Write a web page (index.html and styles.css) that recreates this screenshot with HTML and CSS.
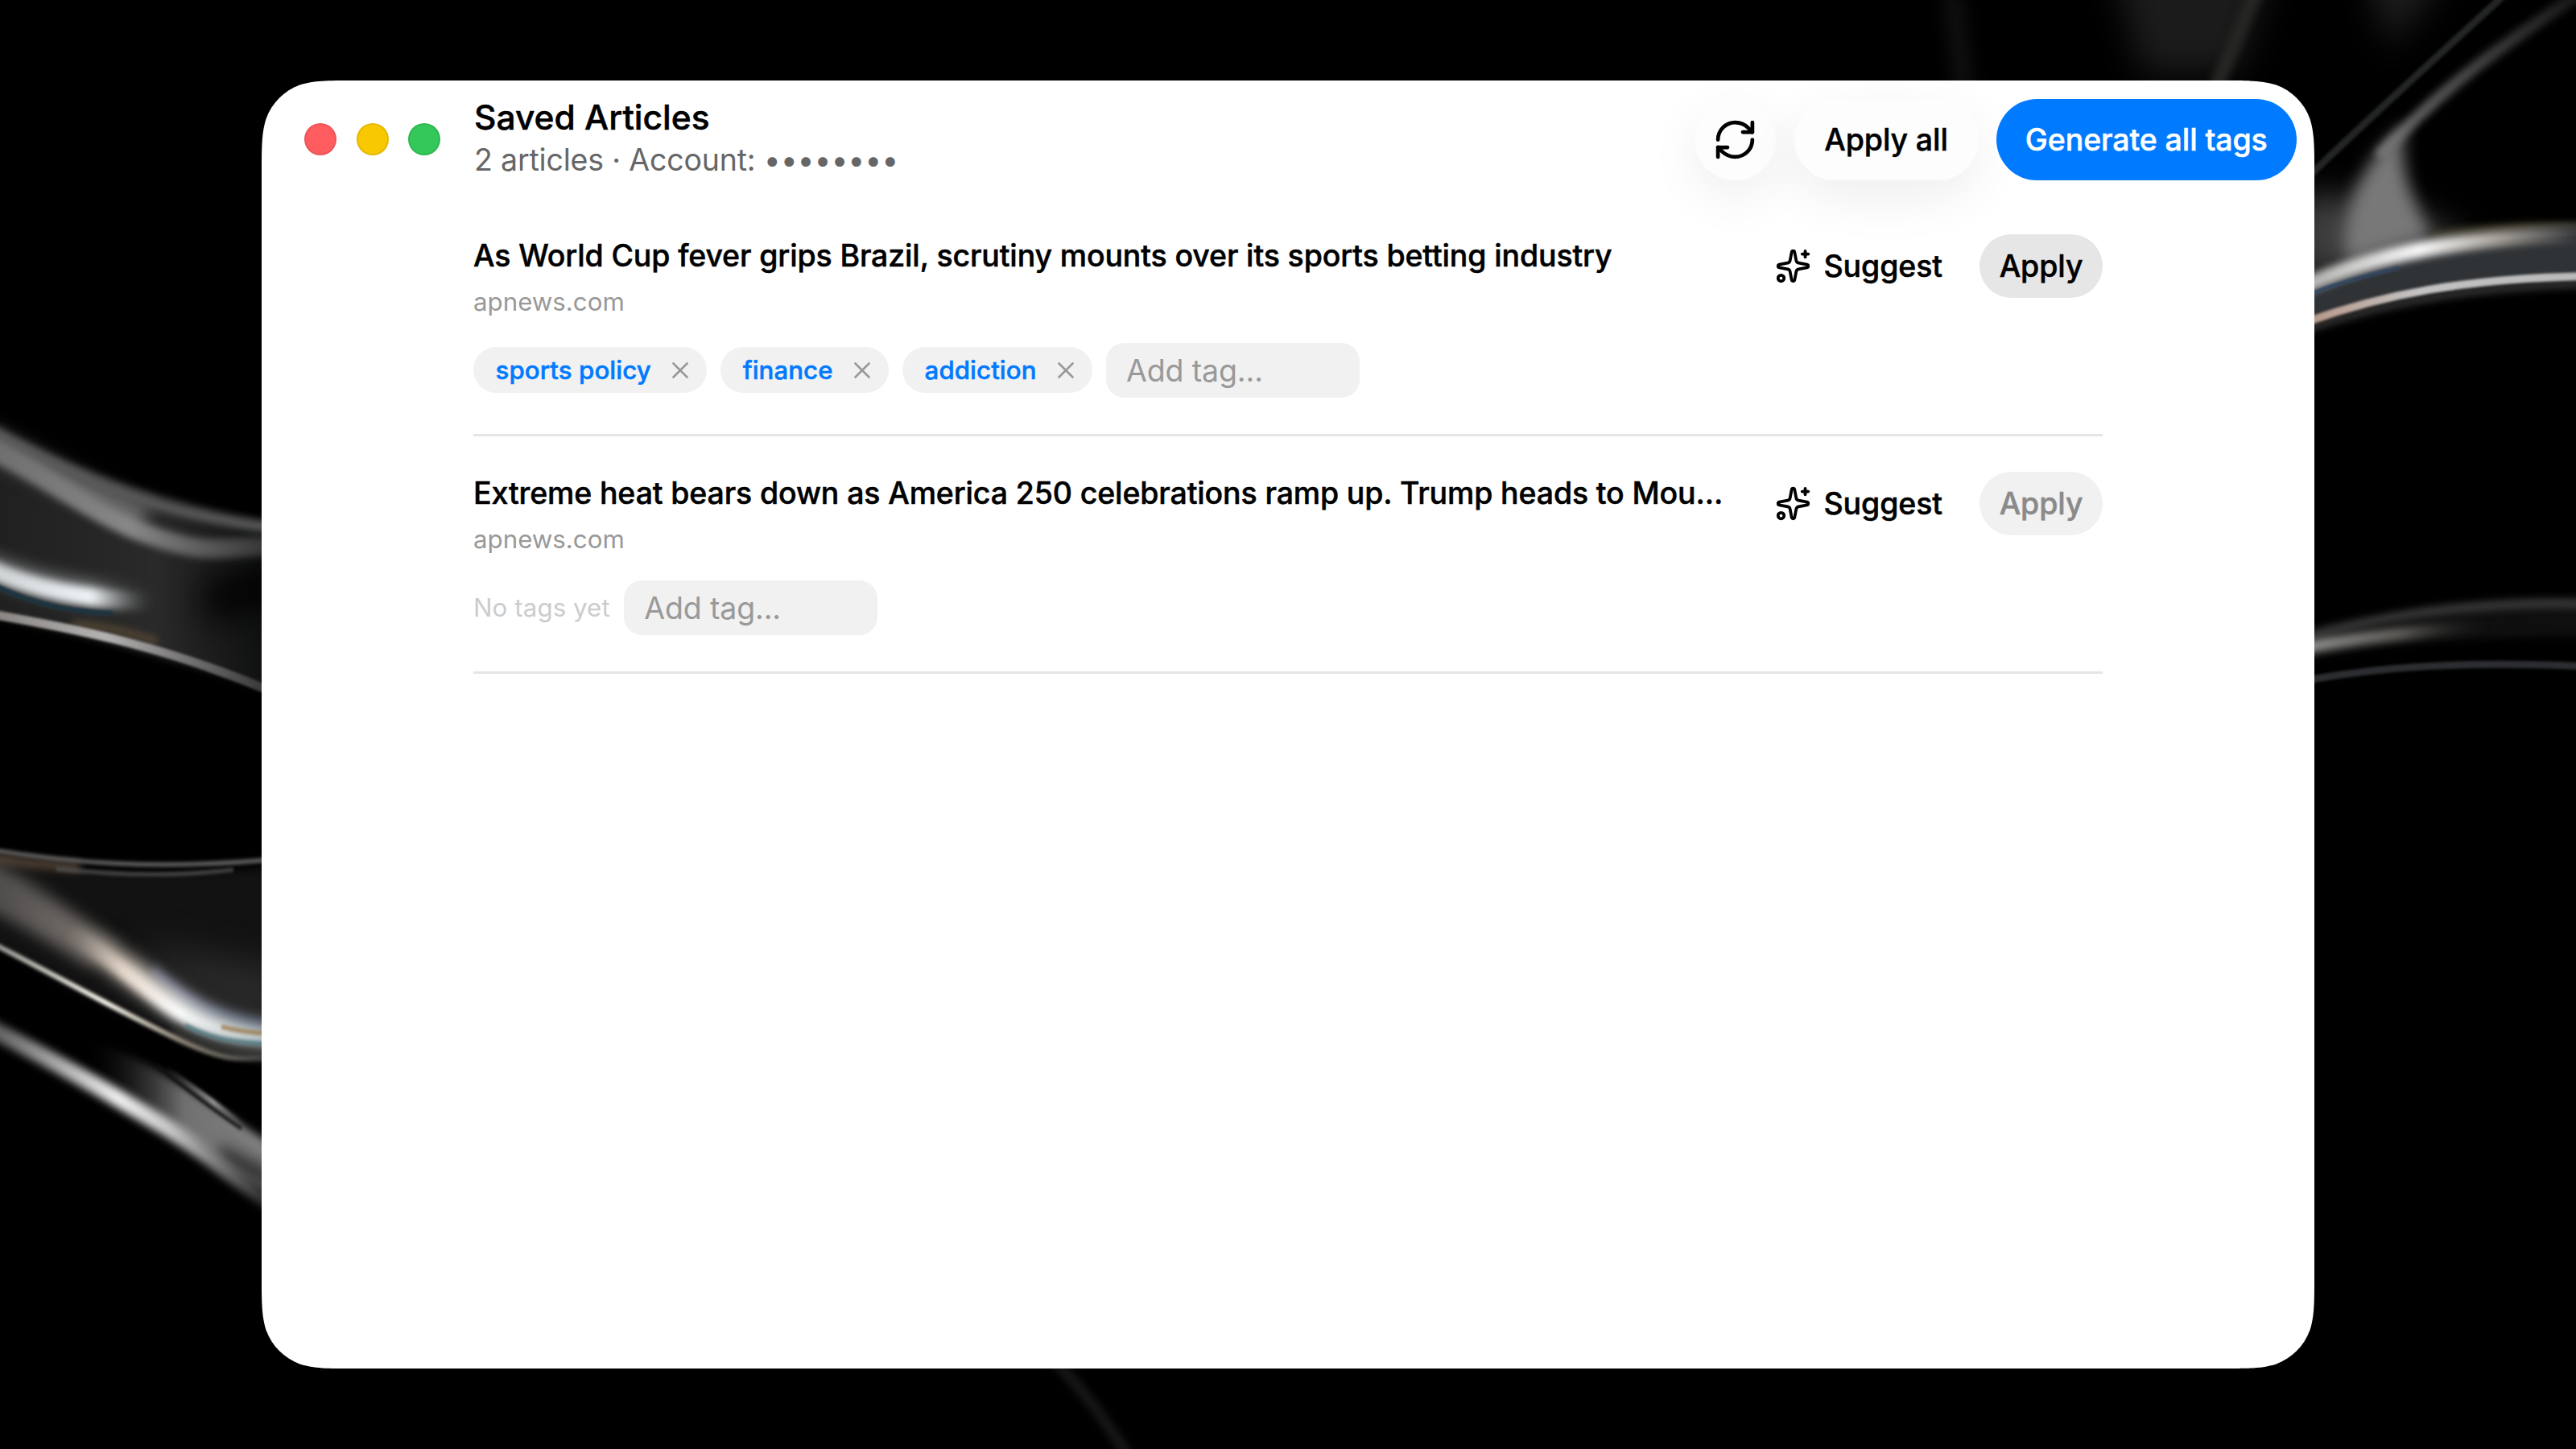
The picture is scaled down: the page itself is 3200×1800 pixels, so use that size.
FILE: index.html
```html
<!DOCTYPE html>
<html lang="en">
<head>
  <meta charset="UTF-8" />
  <meta name="viewport" content="width=device-width, initial-scale=1.0"/>
  <title>Saved Articles</title>
  <link rel="stylesheet" href="styles.css">
</head>
<body>
  <svg class="wallpaper" viewBox="0 0 3200 1800" fill="none" aria-hidden="true">
    <defs>
      <filter id="b2" color-interpolation-filters="sRGB" filterUnits="userSpaceOnUse" x="-100" y="-100" width="3400" height="2000"><feGaussianBlur stdDeviation="1.8"/></filter>
      <filter id="b5" color-interpolation-filters="sRGB" filterUnits="userSpaceOnUse" x="-100" y="-100" width="3400" height="2000"><feGaussianBlur stdDeviation="5"/></filter>
      <filter id="b10" color-interpolation-filters="sRGB" filterUnits="userSpaceOnUse" x="-100" y="-100" width="3400" height="2000"><feGaussianBlur stdDeviation="10"/></filter>
      <filter id="b20" color-interpolation-filters="sRGB" filterUnits="userSpaceOnUse" x="-100" y="-100" width="3400" height="2000"><feGaussianBlur stdDeviation="20"/></filter>
      <linearGradient id="fold1" gradientUnits="userSpaceOnUse" x1="0" y1="0" x2="325" y2="0">
        <stop offset="0" stop-color="#202020"/><stop offset=".6" stop-color="#2a2a2a"/><stop offset="1" stop-color="#101111"/>
      </linearGradient>
      <linearGradient id="band1" gradientUnits="userSpaceOnUse" x1="0" y1="0" x2="325" y2="0">
        <stop offset="0" stop-color="#707070"/><stop offset=".5" stop-color="#888"/><stop offset="1" stop-color="#383838"/>
      </linearGradient>
      <linearGradient id="glow1" gradientUnits="userSpaceOnUse" x1="0" y1="0" x2="190" y2="0">
        <stop offset="0" stop-color="#d0d4d6"/><stop offset=".6" stop-color="#eef3f6"/><stop offset="1" stop-color="#555" stop-opacity="0"/>
      </linearGradient>
      <linearGradient id="rim1" gradientUnits="userSpaceOnUse" x1="0" y1="0" x2="325" y2="0">
        <stop offset="0" stop-color="#8a8684"/><stop offset=".4" stop-color="#b5b3b2"/><stop offset="1" stop-color="#3a3a3a"/>
      </linearGradient>
      <linearGradient id="band2" gradientUnits="userSpaceOnUse" x1="0" y1="0" x2="325" y2="0">
        <stop offset="0" stop-color="#4e4c4c"/><stop offset=".3" stop-color="#7d7671"/><stop offset=".47" stop-color="#e8dacc"/><stop offset=".68" stop-color="#fff"/><stop offset="1" stop-color="#b8c4c8"/>
      </linearGradient>
      <linearGradient id="rim2" gradientUnits="userSpaceOnUse" x1="0" y1="0" x2="325" y2="0">
        <stop offset="0" stop-color="#9d9d98"/><stop offset=".4" stop-color="#fffaf2"/><stop offset=".7" stop-color="#8b8474"/><stop offset="1" stop-color="#444"/>
      </linearGradient>
      <linearGradient id="band3" gradientUnits="userSpaceOnUse" x1="0" y1="0" x2="325" y2="0">
        <stop offset="0" stop-color="#666"/><stop offset=".45" stop-color="#f2f2f2"/><stop offset=".65" stop-color="#c8c8c8"/><stop offset="1" stop-color="#333"/>
      </linearGradient>
      <linearGradient id="fold3" gradientUnits="userSpaceOnUse" x1="110" y1="0" x2="325" y2="0">
        <stop offset="0" stop-color="#111" stop-opacity="0"/><stop offset=".55" stop-color="#707070"/><stop offset="1" stop-color="#808080"/>
      </linearGradient>
      <linearGradient id="line3" gradientUnits="userSpaceOnUse" x1="205" y1="0" x2="305" y2="0">
        <stop offset="0" stop-color="#777" stop-opacity="0"/><stop offset=".6" stop-color="#999"/><stop offset="1" stop-color="#777" stop-opacity="0"/>
      </linearGradient>
      <linearGradient id="arc1" gradientUnits="userSpaceOnUse" x1="2875" y1="0" x2="3200" y2="0">
        <stop offset="0" stop-color="#b5b5b2"/><stop offset=".4" stop-color="#f8f7f8"/><stop offset=".7" stop-color="#a8a39b"/><stop offset="1" stop-color="#3a3c40"/>
      </linearGradient>
      <linearGradient id="arc2" gradientUnits="userSpaceOnUse" x1="2875" y1="0" x2="3200" y2="0">
        <stop offset="0" stop-color="#b89a8c"/><stop offset=".4" stop-color="#c3c3c3"/><stop offset="1" stop-color="#b9b9b9"/>
      </linearGradient>
      <linearGradient id="arc3" gradientUnits="userSpaceOnUse" x1="2875" y1="0" x2="3090" y2="0">
        <stop offset="0" stop-color="#8a8a88"/><stop offset=".5" stop-color="#5d5b57"/><stop offset="1" stop-color="#222" stop-opacity="0"/>
      </linearGradient>
      <linearGradient id="ray" gradientUnits="userSpaceOnUse" x1="3190" y1="0" x2="2950" y2="200">
        <stop offset="0" stop-color="#1c1c1c"/><stop offset="1" stop-color="#707070"/>
      </linearGradient>
    </defs>

    <!-- upper left fold -->
    <path filter="url(#b5)" fill="url(#fold1)" d="M-20 530 C50 560 180 620 340 648 V860 C230 825 120 790 -20 765z"/>
    <path filter="url(#b20)" stroke="#020202" stroke-width="50" d="M255 752 C290 738 320 730 370 722"/>
    <path filter="url(#b10)" stroke="#6a6a6a" stroke-width="34" d="M-20 545 C50 580 110 615 180 645"/>
    <path filter="url(#b5)" stroke="#5a5a5a" stroke-width="13" d="M-20 530 C80 590 180 635 340 656"/>
    <path filter="url(#b5)" stroke="url(#band1)" stroke-width="24" d="M-20 552 C60 592 120 642 190 666 S270 680 340 678"/>
    <path filter="url(#b10)" stroke="url(#glow1)" stroke-width="26" opacity=".5" d="M-20 700 C40 726 100 740 190 744"/>
    <path filter="url(#b5)" stroke="url(#glow1)" stroke-width="22" d="M-20 704 C40 732 100 744 190 748"/>
    <path filter="url(#b2)" stroke="#1d3440" stroke-width="6" d="M-10 726 C40 750 80 759 140 762"/>
    <path filter="url(#b5)" stroke="#594a35" stroke-width="8" d="M90 775 C130 778 160 785 195 797"/>
    <path filter="url(#b2)" stroke="url(#rim1)" stroke-width="11" d="M-10 763 C110 784 210 805 340 860"/>

    <g transform="matrix(1 0 0 1.0714 0 -71.4)">
      <!-- lower left fold -->
      <path filter="url(#b5)" fill="#121212" d="M-20 1055 C90 1080 200 1085 340 1072 V1280 C230 1290 120 1230 -20 1155z"/>
      <path filter="url(#b20)" fill="#2a2a2a" d="M170 1160 L350 1190 V1260 C280 1250 220 1220 170 1160z"/>
      <path filter="url(#b10)" fill="#555250" d="M-30 1060 C30 1075 90 1130 150 1165 L110 1185 C60 1160 20 1130 -30 1112z"/>
      <path filter="url(#b5)" stroke="#5b4a3c" stroke-width="10" d="M-10 1062 C30 1066 60 1070 100 1072"/>
      <path filter="url(#b2)" stroke="#606060" stroke-width="5" d="M-10 1052 C80 1066 190 1076 340 1063"/>
      <path filter="url(#b2)" stroke="#505050" stroke-width="4" d="M70 1074 C150 1082 220 1083 290 1075"/>
      <path filter="url(#b5)" stroke="#373e55" stroke-width="14" d="M190 1190 C230 1230 270 1247 335 1257"/>
      <path filter="url(#b10)" stroke="url(#band2)" stroke-width="30" opacity=".85" d="M-20 1095 C60 1130 120 1165 180 1205 S270 1264 340 1271"/>
      <path filter="url(#b5)" stroke="url(#band2)" stroke-width="16" d="M90 1150 C130 1172 170 1206 205 1230 S280 1266 340 1271"/>
      <path filter="url(#b2)" stroke="#9a7648" stroke-width="4" d="M275 1257 C295 1262 310 1264 335 1265"/>
      <path filter="url(#b2)" stroke="#4c7d88" stroke-width="4" d="M230 1256 C260 1270 290 1276 335 1277"/>
      <path filter="url(#b5)" stroke="#3a3a36" stroke-width="10" d="M215 1262 C260 1285 300 1288 340 1287"/>
      <path filter="url(#b2)" stroke="url(#rim2)" stroke-width="6" d="M-10 1160 C90 1208 150 1240 220 1271 S300 1292 340 1293"/>

      <!-- bottom left fold -->
      <path filter="url(#b5)" fill="url(#fold3)" d="M110 1275 C160 1285 200 1305 360 1408 V1475 C260 1400 200 1370 110 1320z"/>
      <path filter="url(#b10)" stroke="#222" stroke-width="20" d="M270 1405 L350 1440"/>
      <path filter="url(#b5)" stroke="url(#band3)" stroke-width="20" d="M-20 1255 C90 1308 140 1336 200 1370 S280 1425 340 1462"/>
      <path filter="url(#b2)" stroke="#111" stroke-width="4" d="M195 1302 C230 1328 260 1350 300 1375"/>
      <path filter="url(#b2)" stroke="url(#line3)" stroke-width="6" d="M205 1304 C240 1328 270 1347 305 1373"/>
    </g>

    <!-- upper right fold -->
    <path filter="url(#b20)" fill="#1b1b1b" d="M2620 -60 H2830 L2780 90 H2660z"/>
    <path filter="url(#b20)" fill="#1d1d1d" d="M2930 -60 H3060 L2970 60z"/>
    <path filter="url(#b5)" stroke="#262624" stroke-width="18" d="M2806 -20 L2752 110"/>
    <path filter="url(#b10)" stroke="#101010" stroke-width="24" d="M2425 -10 L2440 110"/>
    <path filter="url(#b2)" stroke="#222524" stroke-width="9" d="M3120 -15 C3040 60 2960 130 2865 222"/>
    <path filter="url(#b5)" stroke="url(#ray)" stroke-width="15" d="M3215 -15 C3110 55 3030 110 2955 195"/>
    <path filter="url(#b20)" fill="#404040" d="M2850 245 H2960 L3070 300 L2860 350z"/>
    <path filter="url(#b10)" fill="#787878" d="M2992 152 C2978 180 2985 230 3020 295 L2915 325 C2905 270 2930 200 2992 152z"/>
    <path filter="url(#b2)" fill="#303336" d="M2865 362 C2960 320 3080 295 3215 296 V342 C3080 345 2980 360 2865 398z"/>
    <path filter="url(#b5)" stroke="#4a4632" stroke-width="8" d="M3020 293 C3080 283 3140 280 3215 282"/>
    <path filter="url(#b5)" stroke="url(#arc1)" stroke-width="20" d="M2860 357 C2930 325 3020 296 3215 289"/>
    <path filter="url(#b2)" stroke="#2f4563" stroke-width="4" d="M2870 365 C2900 353 2940 342 2980 333"/>
    <path filter="url(#b5)" stroke="#333" stroke-width="10" d="M2865 408 C2980 370 3080 356 3215 352"/>
    <path filter="url(#b2)" stroke="url(#arc2)" stroke-width="10" d="M2865 400 C2960 366 3060 346 3215 343"/>

    <!-- lower right fold -->
    <path filter="url(#b5)" fill="#0f0f0f" d="M2865 800 C2980 765 3100 748 3215 750 V790 C3080 790 2960 800 2865 820z"/>
    <path filter="url(#b5)" stroke="#383838" stroke-width="12" d="M2865 791 C2960 765 3080 746 3215 750"/>
    <path filter="url(#b5)" stroke="url(#arc3)" stroke-width="16" d="M2860 805 C2930 792 3000 784 3090 777"/>
    <path filter="url(#b2)" stroke="#2b2d30" stroke-width="9" d="M2865 845 C2960 828 3060 821 3215 828"/>

    <path filter="url(#b5)" stroke="#161616" stroke-width="14" d="M1300 1680 C1345 1725 1370 1760 1402 1810"/>
  </svg>

  <div class="window">
    <header class="toolbar">
      <div class="lights">
        <span class="light red"></span>
        <span class="light yellow"></span>
        <span class="light green"></span>
      </div>
      <div class="heading">
        <h1>Saved Articles</h1>
        <p>2 articles · Account: ••••••••</p>
      </div>
      <div class="actions">
        <button class="btn glass round" aria-label="Refresh">
          <svg class="icon-refresh" viewBox="0 0 24 24">
            <path d="M3 12a9 9 0 0 1 9-9 9.75 9.75 0 0 1 6.74 2.74L21 8"/>
            <path d="M21 3v5h-5"/>
            <path d="M21 12a9 9 0 0 1-9 9 9.75 9.75 0 0 1-6.74-2.74L3 16"/>
            <path d="M8 16H3v5"/>
          </svg>
        </button>
        <button class="btn glass">Apply all</button>
        <button class="btn primary">Generate all tags</button>
      </div>
    </header>

    <main class="list">
      <article class="row">
        <div class="info">
          <h2>As World Cup fever grips Brazil, scrutiny mounts over its sports betting industry</h2>
          <p class="domain">apnews.com</p>
          <div class="tags">
            <span class="tag">sports policy
              <svg class="icon-x" viewBox="0 0 20 20"><path d="M1.5 1.5l17 17M18.5 1.5l-17 17"/></svg>
            </span>
            <span class="tag">finance
              <svg class="icon-x" viewBox="0 0 20 20"><path d="M1.5 1.5l17 17M18.5 1.5l-17 17"/></svg>
            </span>
            <span class="tag">addiction
              <svg class="icon-x" viewBox="0 0 20 20"><path d="M1.5 1.5l17 17M18.5 1.5l-17 17"/></svg>
            </span>
            <input class="add" type="text" placeholder="Add tag..." />
          </div>
        </div>
        <div class="row-actions">
          <button class="suggest">
            <svg class="icon-sparkles" viewBox="0 0 24 24">
              <path d="M11.017 2.814a1 1 0 0 1 1.966 0l1.051 5.558a2 2 0 0 0 1.594 1.594l5.558 1.051a1 1 0 0 1 0 1.966l-5.558 1.051a2 2 0 0 0-1.594 1.594l-1.051 5.558a1 1 0 0 1-1.966 0l-1.051-5.558a2 2 0 0 0-1.594-1.594l-5.558-1.051a1 1 0 0 1 0-1.966l5.558-1.051a2 2 0 0 0 1.594-1.594z"/>
              <path d="M20 2v4"/>
              <path d="M22 4h-4"/>
              <circle cx="4" cy="20" r="2"/>
            </svg>
            Suggest
          </button>
          <button class="apply">Apply</button>
        </div>
      </article>

      <article class="row">
        <div class="info">
          <h2>Extreme heat bears down as America 250 celebrations ramp up. Trump heads to Mou...</h2>
          <p class="domain">apnews.com</p>
          <div class="tags">
            <span class="empty">No tags yet</span>
            <input class="add" type="text" placeholder="Add tag..." />
          </div>
        </div>
        <div class="row-actions">
          <button class="suggest">
            <svg class="icon-sparkles" viewBox="0 0 24 24">
              <path d="M11.017 2.814a1 1 0 0 1 1.966 0l1.051 5.558a2 2 0 0 0 1.594 1.594l5.558 1.051a1 1 0 0 1 0 1.966l-5.558 1.051a2 2 0 0 0-1.594 1.594l-1.051 5.558a1 1 0 0 1-1.966 0l-1.051-5.558a2 2 0 0 0-1.594-1.594l-5.558-1.051a1 1 0 0 1 0-1.966l5.558-1.051a2 2 0 0 0 1.594-1.594z"/>
              <path d="M20 2v4"/>
              <path d="M22 4h-4"/>
              <circle cx="4" cy="20" r="2"/>
            </svg>
            Suggest
          </button>
          <button class="apply" disabled>Apply</button>
        </div>
      </article>
    </main>
  </div>
</body>
</html>
```

FILE: styles.css
```css
* {
  box-sizing: border-box;
}
body {
  margin: 0;
  height: 100vh;
  display: flex;
  justify-content: center;
  align-items: center;
  overflow: hidden;
  background: #000;
  color: #000;
  font-family: Inter, sans-serif;
  font-size: 37.5px;
}
h1, h2, p {
  margin: 0;
}
button, input {
  font: inherit;
  color: inherit;
  letter-spacing: inherit;
  border: none;
}
h1, h2, button, .tag {
  -webkit-text-stroke: 0.5px currentColor;
}
svg {
  display: block;
  flex: none;
}

.wallpaper {
  position: absolute;
  left: 0;
  top: 0;
  width: 3200px;
  height: 1800px;
}

/* continuous corners, r = 75 */
.window {
  position: relative;
  width: 2550px;
  height: 1600px;
  background: #fff;
  clip-path: path("M114.6 0H2435.4C2468.4 0 2484.9 0 2502.6 5.6C2522 12.7 2537.3 28 2544.4 47.4C2550 65.1 2550 81.6 2550 114.6V1485.4C2550 1518.4 2550 1534.9 2544.4 1552.6C2537.3 1572 2522 1587.3 2502.6 1594.4C2484.9 1600 2468.4 1600 2435.4 1600H114.6C81.6 1600 65.1 1600 47.4 1594.4C28 1587.3 12.7 1572 5.6 1552.6C0 1534.9 0 1518.4 0 1485.4V114.6C0 81.6 0 65.1 5.6 47.4C12.7 28 28 12.7 47.4 5.6C65.1 0 81.6 0 114.6 0Z");
}

.toolbar {
  display: flex;
  align-items: center;
  height: 146px;
  padding: 0 22.5px 0 53px;
}
.lights {
  display: flex;
  gap: 24.5px;
}
.light {
  width: 40px;
  height: 40px;
  border-radius: 50%;
  border: 2px solid rgba(0, 0, 0, 0.08);
}
.red {
  background: #ff5c60;
}
.yellow {
  background: #f8c800;
}
.green {
  background: #34c759;
}
.heading {
  margin-left: 42px;
}
.heading h1 {
  font-size: 42.5px;
  font-weight: 500;
  line-height: 52px;
}
.heading p {
  line-height: 54px;
  letter-spacing: -0.18px;
  color: #666;
}
.actions {
  display: flex;
  gap: 22.5px;
  margin-left: auto;
}
.btn {
  width: 229px;
  height: 101px;
  padding: 0;
  border-radius: 51px;
  font-weight: 500;
  letter-spacing: -0.1px;
  white-space: nowrap;
}
.glass {
  background: #fdfdfd;
  box-shadow: 0 20px 65px rgba(0, 0, 0, 0.07);
}
.round {
  display: flex;
  align-items: center;
  justify-content: center;
  width: 101px;
}
.primary {
  width: 372.5px;
  background: #007aff;
  color: #fff;
}
.icon-refresh {
  width: 57px;
  height: 57px;
}
.icon-refresh, .icon-sparkles, .icon-x {
  fill: none;
  stroke: currentColor;
  stroke-width: 2;
  stroke-linecap: round;
  stroke-linejoin: round;
}

.list {
  margin: 0 263px;
  padding-top: 1px;
}
.row {
  display: flex;
  justify-content: space-between;
  height: 295px;
  padding-top: 44px;
  border-bottom: 3px solid #e5e5e5;
}
.info h2 {
  font-size: 37.5px;
  font-weight: 500;
  line-height: 54px;
  letter-spacing: -0.14px;
  white-space: nowrap;
}
.domain {
  margin-top: 6px;
  font-size: 31.25px;
  line-height: 48px;
  color: #999;
}
.tags {
  display: flex;
  align-items: center;
  gap: 17.5px;
  margin-top: 27px;
}
.tag {
  display: flex;
  align-items: center;
  gap: 26px;
  height: 57px;
  padding: 0 23px 0 27.5px;
  border-radius: 29px;
  background: #f1f1f1;
  color: #007aff;
  font-size: 31.25px;
  font-weight: 500;
  letter-spacing: 0.05px;
}
.icon-x {
  width: 20px;
  height: 20px;
  color: #999;
  stroke-width: 2.6;
}
.empty {
  font-size: 31.25px;
  letter-spacing: 0.08px;
  color: #ccc;
}
.add {
  width: 315px;
  height: 67.5px;
  padding: 2px 25px 0;
  border-radius: 22.5px;
  background: #f1f1f1;
  letter-spacing: -0.15px;
}
.add::placeholder {
  color: #999;
}
.row-actions {
  display: flex;
  align-items: center;
  align-self: flex-start;
  font-weight: 500;
  letter-spacing: -0.1px;
}
.suggest {
  display: flex;
  align-items: center;
  gap: 15px;
  padding: 0 46px 0 0;
  background: none;
}
.icon-sparkles {
  width: 45px;
  height: 45px;
}
.apply {
  width: 153px;
  height: 79px;
  padding: 0;
  border-radius: 40px;
  background: #e6e6e6;
}
.apply:disabled {
  background: #f1f1f1;
  color: #8a8a8a;
}
```
